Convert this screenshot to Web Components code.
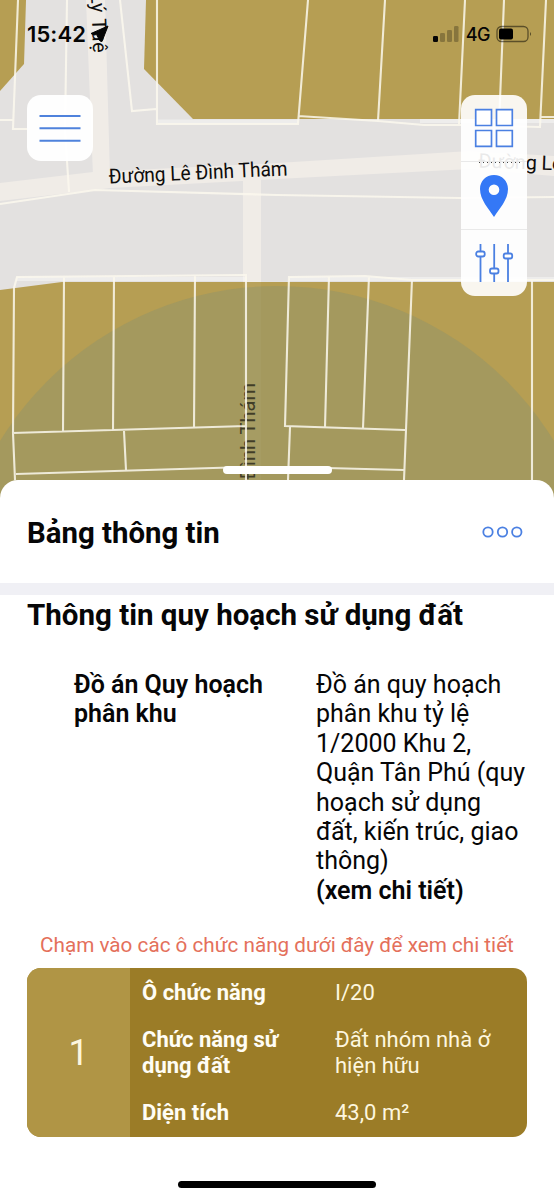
<!DOCTYPE html>
<html lang="vi">
<head>
<meta charset="utf-8">
<title>Bảng thông tin</title>
<style>
html,body{margin:0;padding:0}
body{width:554px;height:1200px;overflow:hidden;background:#fff;font-family:Roboto,"Liberation Sans",sans-serif;color:#060607}
</style>
</head>
<body>
<planning-app></planning-app>
<script>
const define = (name, html) => customElements.define(name, class extends HTMLElement {
  constructor() {
    super();
    const t = document.createElement('template');
    t.innerHTML = html;
    this.attachShadow({ mode: 'open' }).append(t.content.cloneNode(true));
  }
});

define('parcel-map', `
<style>:host{display:block;position:absolute;inset:0 0 auto 0;height:510px}svg{display:block}</style>
<svg width="554" height="510" viewBox="0 0 554 510">
  <rect width="554" height="510" fill="#e3e1e0"/>
  <g fill="#f0ece7">
    <path d="M86 0H105L110 176L93 176Z"/>
    <path d="M0 183L93 172L277 163L470 151L554 156V176L470 169L277 179L110 188L95 190L0 201Z"/>
    <path d="M243 180H261V284H243Z"/>
  </g>
  <g fill="#b69e53">
    <path d="M0 0H26L24 64L0 91Z"/>
    <path d="M146 0H554V119H193L144 69Z"/>
    <path d="M0 290L62 282H554V510H0Z"/>
  </g>
  <path d="M243 282H261V510H243Z" fill="#fff" opacity=".05"/>
  <circle cx="277" cy="611" r="325" fill="#7b9078" opacity=".3"/>
  <text transform="translate(255 383) rotate(-90)" text-anchor="end" font-family="Roboto,sans-serif" font-size="20" fill="#17150f" opacity=".7">Đình Thám</text>
  <g fill="none" stroke="#fff" stroke-width="4" opacity=".4">
    <path d="M158 121.500H298M420 121H554M16 279H247M289 279H554"/>
  </g>
  <g fill="none" stroke="#fcf8ed" stroke-width="2.100" stroke-opacity=".85">
    <path d="M18 0L13 129H27M0 120H14M67 0L65 130L69 192"/>
    <path d="M120 0L132 111L156 109M157 0V124H298L308 0M298 116L378 121L424 125L461 125M385 0L378 121M465 0L459 125M504 0L499 125M546 0L540 127L500 126M540 117H554"/>
    <path d="M0 204L95 190L277 195L460 198L554 197"/>
    <path d="M15 480L13 433L14 288L17 277L246 275V480M64 277L63 431M114 277L113 430M195 276L194 428M12 433L246 426M124 431L126 470M16 474L246 467"/>
    <path d="M289 276L285 426L405 430M329 276L325 427M369 276L363 428M412 279L404 480M289 277L365 276L412 280H554M532 280V480M290 427L288 480M288 467L404 470"/>
  </g>
  <g font-family="Roboto,sans-serif" fill="#0e0d0c" font-size="20.500">
    <text transform="translate(109 183.500) rotate(-2.600)" textLength="179" lengthAdjust="spacingAndGlyphs">Đường Lê Đình Thám</text>
    <text transform="translate(478 167.500) rotate(2)" font-size="20" letter-spacing="-.2">Đường Lê</text>
    <text transform="translate(91 -7) rotate(88)" textLength="60" font-size="20">Lý Tuệ</text>
  </g>
</svg>`);

define('status-bar', `
<style>
:host{display:flex;align-items:center;justify-content:space-between;height:68px;padding:0 22px 0 27px;box-sizing:border-box;position:relative;font:600 22px Inter,sans-serif;color:#050505}
div{display:flex;align-items:center}
.l{gap:4px}.time{letter-spacing:.1px}
.g{font-size:18px;font-weight:500;margin:0 6px 0 7px;letter-spacing:-.5px}
</style>
<div class="l"><span class="time">15:42</span><svg width="19" height="18" viewBox="0 0 19 18"><path d="M18 1L1 8.500L4 10L6.500 9.500L10 16L12 16.500Z" fill="#050505" stroke="#050505" stroke-linejoin="round"/></svg></div>
<div><svg width="26" height="16" viewBox="0 0 26 16"><rect y="10" width="5" height="6" rx="1.300" fill="#050505"/><g opacity=".25"><rect x="7" y="7" width="5" height="9" rx="1.300"/><rect x="14" y="4" width="5" height="12" rx="1.300"/><rect x="21" y="0" width="4.500" height="16" rx="1.300"/></g></svg>
<span class="g">4G</span>
<svg width="36" height="18" viewBox="0 0 36 18"><rect x="1" y="1.500" width="31" height="15" rx="4.500" fill="none" stroke="#000" stroke-opacity=".5" stroke-width="1.300"/><rect x="3" y="3.500" width="14" height="11" rx="2" fill="#000"/><path d="M34 7Q36 9 34 11Z" opacity=".55"/></svg></div>`);

define('menu-button', `
<style>:host{display:grid;place-items:center;width:66px;height:66px;border-radius:14px;background:#fffffff5}svg{display:block}</style>
<svg width="42" height="30" viewBox="0 0 42 30"><path d="M.5 3H41.500M.5 15.300H41.500M.5 27.700H41.500" stroke="#4f82dc" stroke-width="2"/></svg>`);

define('tool-rail', `
<style>
:host{display:grid;grid-template-rows:66px 68px 67px;width:66px;height:201px;border-radius:14px;background:#ffffffe8;overflow:hidden}
div{display:grid;place-items:center;box-sizing:border-box}div+div{border-top:1px solid #e9e9e9}
.pin{background:repeating-linear-gradient(90deg,#444 0 1.500px,transparent 1.500px 4px) 18px 0/44px 1px no-repeat}
svg{display:block}
</style>
<div><svg width="40" height="40" viewBox="0 0 40 40" fill="#fff" stroke="#4b80e2" stroke-width="1.700"><path d="M1.700 1.700H17.500V17.500H1.700ZM22.500 1.700H38.300V17.500H22.500ZM1.700 22.500H17.500V38.300H1.700ZM22.500 22.500H38.300V38.300H22.500Z"/></svg></div>
<div class="pin"><svg width="28" height="42" viewBox="0 0 28 42"><path fill="#3478f6" fill-rule="evenodd" d="M14 0C6 0 0 6 0 14C0 25 9 34 14 42C19 34 28 25 28 14C28 6 22 0 14 0ZM14 9.500a5.300 5.300 0 1 1 0 10.600a5.300 5.300 0 1 1 0-10.600Z"/></svg></div>
<div><svg width="40" height="38" viewBox="0 0 40 38" fill="#fff" stroke="#4b80e2" stroke-width="1.800"><path d="M6.500 0V38M20.200 0V38M34 0V38"/><rect x="2.200" y="7.500" width="8.500" height="5" rx="2"/><rect x="16" y="24.500" width="8.500" height="5" rx="2"/><rect x="29.700" y="9.500" width="8.500" height="5" rx="2"/></svg></div>`);

define('sheet-header', `
<style>
:host{display:flex;align-items:center;justify-content:space-between;height:103px;padding:0 31px 0 27px;box-sizing:border-box;border-radius:18px 18px 0 0;background:#fff}
h1{margin:2px 0 0;font-size:29.400px;font-weight:700;line-height:34px}
</style>
<h1><slot></slot></h1>
<svg width="41" height="14" viewBox="0 0 41 14" fill="none" stroke="#4b80e2" stroke-width="1.800"><circle cx="6" cy="7" r="4.700"/><circle cx="20.500" cy="7" r="4.700"/><circle cx="34.800" cy="7" r="4.700"/></svg>`);

define('plan-detail', `
<style>
:host{display:grid;grid-template-columns:242px 1fr;height:236px;padding:38px 20px 0 74px;font-size:25px;line-height:29.400px}
.k{font-weight:600}strong{display:block;font-weight:600}
</style>
<div class="k"><slot name="label"></slot></div><div><slot></slot><strong><slot name="link"></slot></strong></div>`);

define('field-row', `
<style>
:host{display:grid;grid-template-columns:193px 1fr;line-height:25.700px;font-size:22px;color:#fdf6df}
b{font-weight:700;color:#fffdf5}
</style><b><slot name="label"></slot></b><span><slot></slot></span>`);

define('zone-card', `
<style>
:host{display:grid;grid-template-columns:103px 1fr;height:169px;margin:0 27px;border-radius:14px;overflow:hidden;background:#9b7c27}
.n{display:grid;place-items:center;background:#b09545;color:#fdf6df;font-size:36px}
.f{display:flex;flex-direction:column;gap:21.500px;padding:12px 0 0 12px}
</style><div class="n"><slot name="index"></slot></div><div class="f"><slot></slot></div>`);

define('planning-app', `
<style>
:host{display:block;position:relative;width:554px;height:1200px;overflow:hidden}
.top{position:relative;height:480px}
.tools{display:flex;justify-content:space-between;align-items:flex-start;padding:27px 27px 0}
.grab{position:absolute;left:223px;top:466px;width:109px;height:8px;border-radius:4px;background:#fff}
.sheet{position:relative}
.body{border-top:12px solid #f0f0f5;background:#fff;height:605px}
h2{margin:0;padding:3px 0 0 27px;font-size:29.500px;line-height:34px;font-weight:700}
p{margin:23.500px 0 8.500px;text-align:center;color:#e4705b;font-size:20.700px;line-height:30px;white-space:nowrap}
.home{width:198px;height:7px;border-radius:4px;background:#000;margin:43.500px auto 0 178px}
</style>
<parcel-map></parcel-map>
<div class="top"><status-bar></status-bar>
<div class="tools"><menu-button></menu-button><tool-rail></tool-rail></div><div class="grab"></div></div>
<div class="sheet"><sheet-header>Bảng thông tin</sheet-header>
<div class="body"><h2>Thông tin quy hoạch sử dụng đất</h2>
<plan-detail><span slot="label">Đồ án Quy hoạch<br>phân khu</span>Đồ án quy hoạch<br>phân khu tỷ lệ<br>1/2000 Khu 2,<br>Quận Tân Phú (quy<br>hoạch sử dụng<br>đất, kiến trúc, giao<br>thông)<span slot="link">(xem chi tiết)</span></plan-detail>
<p>Chạm vào các ô chức năng dưới đây để xem chi tiết</p>
<zone-card><span slot="index">1</span>
<field-row><span slot="label">Ô chức năng</span>I/20</field-row>
<field-row><span slot="label">Chức năng sử<br>dụng đất</span>Đất nhóm nhà ở<br>hiện hữu</field-row>
<field-row><span slot="label">Diện tích</span>43,0 m²</field-row></zone-card>
<div class="home"></div></div></div>`);
</script>
</body>
</html>
